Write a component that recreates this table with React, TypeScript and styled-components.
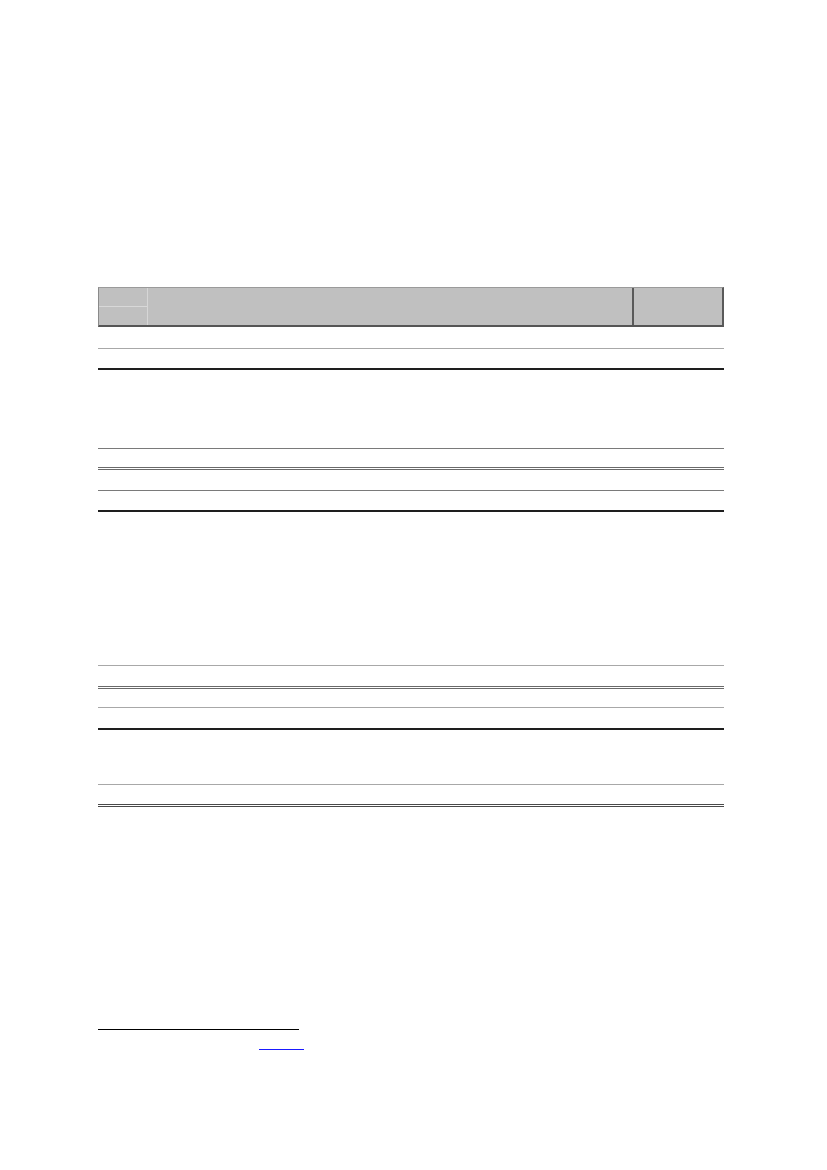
import React from 'react';
import styled, {createGlobalStyle} from 'styled-components';

const GlobalStyle = createGlobalStyle`
    html, body {
        margin: 0;
        padding: 0;
        background: #ffffff;
        font-family: "Liberation Serif", "Times New Roman", serif;
    }
`;

type Rule = 'thin' | 'light' | 'heavy' | 'double' | 'doubleDark';

const rules: Record<Rule, string> = {
    thin: '1px solid #7a7a7a',
    light: '1px solid #a8a8a8',
    heavy: '2px solid #1e1e1e',
    double: '3px double #6a6a6a',
    doubleDark: '3px double #4a4a4a',
};

const rows: {height: number; rule: Rule}[] = [
    {height: 22, rule: 'light'},
    {height: 21, rule: 'heavy'},
    {height: 79, rule: 'thin'},
    {height: 21, rule: 'double'},
    {height: 21, rule: 'thin'},
    {height: 21, rule: 'heavy'},
    {height: 154, rule: 'light'},
    {height: 23, rule: 'double'},
    {height: 19, rule: 'light'},
    {height: 22, rule: 'heavy'},
    {height: 55, rule: 'light'},
    {height: 22, rule: 'doubleDark'},
];

const App: React.FunctionComponent = () => {
    return (
        <>
            <GlobalStyle/>
            <Page>
                <Table>
                    <HeaderRow>
                        <SplitCell>
                            <SubCell/>
                            <SubCell/>
                        </SplitCell>
                        <HeadCell/>
                        <LastHeadCell/>
                    </HeaderRow>
                    {rows.map((row, i) => (
                        <BodyRow key={i} $height={row.height} $rule={row.rule}>
                            <BodyCell/>
                            <BodyCell/>
                            <BodyCell/>
                        </BodyRow>
                    ))}
                </Table>
                <Footnotes>
                    <Separator/>
                    <Note>
                        <NoteLink/>
                    </Note>
                </Footnotes>
            </Page>
        </>
    );
}

const Page = styled.div`
    width: 827px;
    min-height: 1170px;
    box-sizing: border-box;
    padding: 287px 0 0 98px;
`;

const Table = styled.div`
    width: 626px;
    display: flex;
    flex-direction: column;
`;

const HeaderRow = styled.div`
    display: grid;
    grid-template-columns: 49px 486px 1fr;
    height: 40px;
    box-sizing: border-box;
    background: #c0c0c0;
    border-top: 1px solid #9a9a9a;
    border-left: 1px solid #8a8a8a;
    border-right: 2px solid #5a5a5a;
    border-bottom: 2px solid #555555;
`;

const SplitCell = styled.div`
    display: flex;
    flex-direction: column;
    border-right: 1px solid #d6d6d6;
`;

const SubCell = styled.div`
    flex: 1;
    &:first-child {
        border-bottom: 1px solid #d8d8d8;
    }
`;

const HeadCell = styled.div`
    border-right: 2px solid #5a5a5a;
`;

const LastHeadCell = styled.div``;

const BodyRow = styled.div<{$height: number; $rule: Rule}>`
    display: grid;
    grid-template-columns: 49px 486px 1fr;
    height: ${props => props.$height}px;
    box-sizing: border-box;
    border-bottom: ${props => rules[props.$rule]};
`;

const BodyCell = styled.div``;

const Footnotes = styled.div`
    margin-top: 222px;
`;

const Separator = styled.div`
    width: 201px;
    height: 1px;
    background: #000000;
`;

const Note = styled.div`
    display: flex;
    height: 21px;
    padding-left: 161px;
`;

const NoteLink = styled.span`
    display: block;
    width: 45px;
    height: 20px;
    box-sizing: border-box;
    border-bottom: 1px solid #1a1aff;
`;

export default App;
